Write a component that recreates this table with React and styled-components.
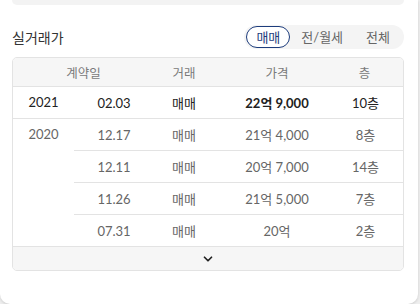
import React from 'react';
import styled, { createGlobalStyle } from 'styled-components';
import { ChevronDown } from 'lucide-react';

const GlobalStyle = createGlobalStyle`
  body {
    margin: 0;
    background: #eeeeee;
    font-family: Lato, "Noto Sans CJK KR", sans-serif;
  }
`;

const Card = styled.div`
  width: 418px;
  box-sizing: border-box;
  background: #fff;
  border-radius: 0 0 10px 10px;
  box-shadow: 0 1px 3px rgba(0, 0, 0, 0.14);
  padding: 0 14px 33px 12px;
`;

const TopStrip = styled.div`
  height: 5px;
  background: #f3f3f3;
  border-radius: 0 0 8px 8px;
`;

const TitleRow = styled.div`
  display: flex;
  align-items: center;
  justify-content: space-between;
  margin-top: 20px;
  height: 24px;
`;

const Title = styled.h2`
  margin: 0;
  font-size: 14px;
  font-weight: 400;
  color: #333;
`;

const Toggle = styled.div`
  display: flex;
  align-items: center;
  height: 24px;
  padding: 0 2px;
  background: #f4f4f4;
  border-radius: 12px;
`;

const ToggleBtn = styled.button`
  height: 22px;
  box-sizing: border-box;
  padding: 0 ${p => p.$pad}px;
  border: 1.5px solid ${p => (p.$active ? '#1d3c7c' : 'transparent')};
  border-radius: 11px;
  background: ${p => (p.$active ? '#fff' : 'transparent')};
  color: ${p => (p.$active ? '#1d3c7c' : '#666')};
  font-family: inherit;
  font-size: 13px;
  line-height: 1;
  cursor: pointer;
`;

const Table = styled.div`
  margin-top: 8px;
  border: 1px solid #e3e3e3;
  border-radius: 5px;
  overflow: hidden;
  font-size: 13px;
`;

const HeadRow = styled.div`
  display: grid;
  grid-template-columns: 141px 60px 126px 1fr;
  height: 28px;
  align-items: center;
  background: #f6f6f6;
  color: #7a7a7a;
  font-size: 12.5px;
  text-align: center;
`;

const Cell = styled.div`
  text-align: center;
  padding-right: ${p => p.$pr || 0}px;
`;

const YearGroup = styled.div`
  display: flex;
  border-top: 1px solid #e3e3e3;
  color: ${p => (p.$strong ? '#222' : '#666')};
`;

const Year = styled.div`
  width: 61px;
  flex: none;
  text-align: center;
  line-height: 31px;
`;

const Entries = styled.div`
  flex: 1;
`;

const Entry = styled.div`
  display: grid;
  grid-template-columns: 80px 60px 126px 1fr;
  align-items: center;
  height: 31px;
  & + & {
    border-top: 1px solid #e3e3e3;
  }
`;

const Price = styled(Cell)`
  font-weight: ${p => (p.$bold ? 700 : 400)};
`;

const Footer = styled.div`
  display: flex;
  justify-content: center;
  align-items: center;
  height: 23px;
  border-top: 1px solid #e3e3e3;
  background: #f6f6f6;
  color: #222;
`;

const data = [
  { year: '2021', strong: true, rows: [['02.03', '매매', '22억 9,000', '10층']] },
  {
    year: '2020',
    rows: [
      ['12.17', '매매', '21억 4,000', '8층'],
      ['12.11', '매매', '20억 7,000', '14층'],
      ['11.26', '매매', '21억 5,000', '7층'],
      ['07.31', '매매', '20억', '2층'],
    ],
  },
];

export default function App() {
  return (
    <>
      <GlobalStyle />
      <Card>
        <TopStrip />
        <TitleRow>
          <Title>실거래가</Title>
          <Toggle>
            <ToggleBtn $active $pad={9}>매매</ToggleBtn>
            <ToggleBtn $pad={10}>전/월세</ToggleBtn>
            <ToggleBtn $pad={11}>전체</ToggleBtn>
          </Toggle>
        </TitleRow>
        <Table>
          <HeadRow>
            <Cell>계약일</Cell>
            <Cell>거래</Cell>
            <Cell>가격</Cell>
            <Cell $pr={14}>층</Cell>
          </HeadRow>
          {data.map(g => (
            <YearGroup key={g.year} $strong={g.strong}>
              <Year>{g.year}</Year>
              <Entries>
                {g.rows.map(r => (
                  <Entry key={r[0]}>
                    <Cell>{r[0]}</Cell>
                    <Cell>{r[1]}</Cell>
                    <Price $bold={g.strong}>{r[2]}</Price>
                    <Cell $pr={12}>{r[3]}</Cell>
                  </Entry>
                ))}
              </Entries>
            </YearGroup>
          ))}
          <Footer>
            <ChevronDown size={14} strokeWidth={3} />
          </Footer>
        </Table>
      </Card>
    </>
  );
}
